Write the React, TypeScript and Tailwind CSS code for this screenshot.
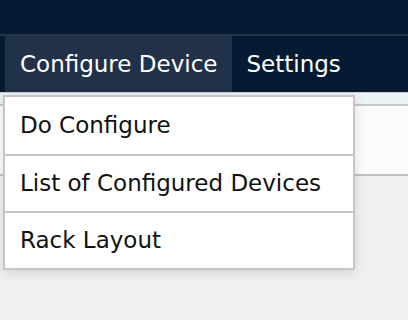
import { useState } from 'react'

const menuItems = ['Do Configure', 'List of Configured Devices', 'Rack Layout']

export default function App() {
  const [open] = useState(true)

  return (
    <div
      className="min-h-screen bg-[#f0f0f2]"
      style={{ fontFamily: '"DejaVu Sans", Verdana, sans-serif' }}
    >
      {/* Top header */}
      <div className="h-[34px] bg-[#061a33]" />
      <div className="h-[2px] bg-[#26364b]" />

      {/* Nav bar */}
      <nav className="flex h-[56px] bg-[#061a33] pl-[5px] text-[23px] text-white">
        <div className="relative flex items-center bg-[#22314a] px-[15px]">
          Configure Device
          {open && (
            <div className="absolute left-[-2px] top-[calc(100%+3px)] z-10 w-[352px] border-2 border-[#c6c6c8] bg-white text-[23px] text-[#111] shadow-[0_3px_10px_rgba(0,0,0,0.12)]">
              {menuItems.map((label, i) => (
                <div
                  key={label}
                  className={
                    'flex h-[57px] items-center pl-[15px] ' +
                    (i > 0 ? 'border-t-2 border-[#c6c6c8]' : '')
                  }
                >
                  {label}
                </div>
              ))}
            </div>
          )}
        </div>
        <div className="flex items-center px-[14px]">Settings</div>
      </nav>

      {/* Page content under the menu */}
      <div className="h-[1px] bg-[#c9cdd1]" />
      <div className="h-[11px] bg-[#ebf2f5]" />
      <div className="h-[2px] bg-[#c8c8c8]" />
      <div className="h-[68px] bg-[#fbfbfb]" />
      <div className="h-[2px] bg-[#c0c0c0]" />
    </div>
  )
}
